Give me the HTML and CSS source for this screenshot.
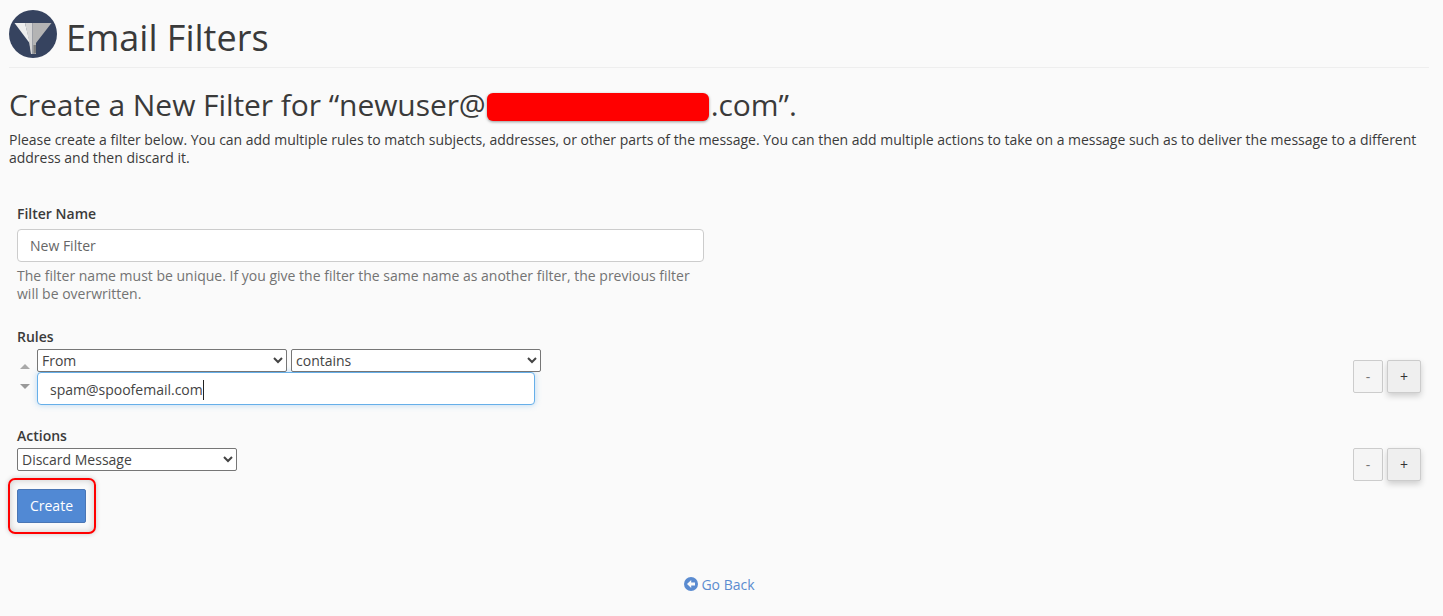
FILE: index.html
```html
<!DOCTYPE html>
<html lang="en">
<head>
<meta charset="utf-8">
<title>Email Filters</title>
<link rel="stylesheet" href="styles.css">
</head>
<body>
<header class="page-header">
  <svg class="logo" viewBox="0 0 48 48" aria-hidden="true">
    <circle cx="24" cy="24" r="24" fill="#36435f"/>
    <path d="M5.5 13H16L21 33V38L22 44L20.5 33Z" fill="#eeeeee"/>
    <path d="M16 13H23.5V44H22L21 38L20.5 33Z" fill="#d6d6d6"/>
    <path d="M23.5 13H42.5L27 33V44L23.5 44Z" fill="#b4b4b4"/>
    <path d="M24.5 35H27V43L24.5 44Z" fill="#7d7d7d"/>
  </svg>
  <h1 class="page-title">Email Filters</h1>
</header>
<main class="content">
  <h2 class="subtitle">Create a New Filter for “newuser@<span class="hidden-domain"></span>.com”.</h2>
  <p class="intro">Please create a filter below. You can add multiple rules to match subjects, addresses, or other parts of the message. You can then add multiple actions to take on a message such as to deliver the message to a different address and then discard it.</p>
  <form class="filter-form">
    <section class="name-section">
      <label class="field-label" for="filter-name">Filter Name</label>
      <input class="text-input" id="filter-name" type="text" placeholder="New Filter">
      <p class="help">The filter name must be unique. If you give the filter the same name as another filter, the previous filter will be overwritten.</p>
    </section>
    <section class="rules-section">
      <div class="field-label">Rules</div>
      <div class="row">
        <div class="movers">
          <span class="up"></span>
          <span class="down"></span>
        </div>
        <div class="rule-fields">
          <div class="select-line">
            <select class="sel sel-from"><option>From</option></select>
            <select class="sel sel-op"><option>contains</option></select>
          </div>
          <div class="text-input focus" role="textbox"><span class="caret">spam@spoofemail.com</span></div>
        </div>
        <div class="pm pm-rule">
          <button class="btn-minus" type="button">-</button>
          <button class="btn-plus" type="button">+</button>
        </div>
      </div>
    </section>
    <section class="actions-section">
      <div class="field-label">Actions</div>
      <div class="row">
        <select class="sel sel-action"><option>Discard Message</option></select>
        <div class="pm pm-action">
          <button class="btn-minus" type="button">-</button>
          <button class="btn-plus" type="button">+</button>
        </div>
      </div>
    </section>
    <div class="submit-line">
      <button class="create" type="button">Create</button>
    </div>
  </form>
  <div class="back"><a href="#">
    <svg class="back-icon" viewBox="0 0 14 14" aria-hidden="true">
      <circle cx="7" cy="7" r="7" fill="#5a8bd0"/>
      <path d="M7.2 3L3 7L7.2 11V8.6H11V5.4H7.2Z" fill="#fafafa"/>
    </svg>Go Back</a></div>
</main>
</body>
</html>
```
FILE: styles.css
```css
*, *::before, *::after { box-sizing: border-box; }
html, body { margin: 0; height: 616px; overflow: hidden; }
body {
  background: #fafafa;
  color: #3a3a3a;
  font-family: "Open Sans", sans-serif;
  font-size: 14px;
  line-height: 18px;
  padding: 0 14px 0 9px;
}
.page-header {
  display: flex;
  align-items: flex-start;
  gap: 9px;
  padding: 10px 0 9px;
  border-bottom: 1px solid #eee;
}
.logo { width: 48px; height: 48px; flex: none; }
.page-title { margin: 0; padding-top: 4px; font-size: 36px; font-weight: 400; line-height: 48px; height: 48px; color: #3a3a3a; }
.subtitle { margin: 19px 0 0; font-size: 30px; font-weight: 400; line-height: 36px; color: #3a3a3a; letter-spacing: -0.07px; white-space: nowrap; }
.hidden-domain {
  display: inline-block;
  width: 222px;
  height: 28px;
  margin: 6px 2px 0 1px;
  vertical-align: top;
  background: #f00;
  border-radius: 6px;
  box-shadow: 0 1px 3px rgba(0,0,0,.4);
}
.intro { margin: 8px 0 0; letter-spacing: -0.018px; }
.filter-form { padding: 0 8px; margin-top: 37px; }
.field-label { display: block; font-weight: 600; line-height: 20px; }
.name-section { width: 687px; }
.text-input {
  display: block;
  width: 100%;
  height: 33px;
  margin-top: 5px;
  padding: 6px 12px;
  border: 1px solid #ccc;
  border-radius: 4px;
  background: #fff;
  font: 14px/20px "Open Sans", sans-serif;
  color: #555;
}
.text-input::placeholder { color: #666; opacity: 1; }
.help { margin: 5px 0 0; color: #737373; }
.rules-section { margin-top: 24px; }
.row { position: relative; display: flex; }
.movers { width: 20px; flex: none; display: flex; flex-direction: column; align-items: center; padding: 17px 5px 0 0; gap: 15px; }
.up, .down { display: block; width: 0; height: 0; border-left: 5px solid transparent; border-right: 5px solid transparent; }
.up { border-bottom: 5px solid #a9a9a9; }
.down { border-top: 5px solid #999; }
.rule-fields { width: 504px; margin-top: 2px; }
.select-line { display: flex; gap: 4px; }
.sel {
  height: 23px;
  padding: 0;
  border: 1px solid #767676;
  border-radius: 2px;
  background-color: #fff;
  font: 14px "Open Sans", sans-serif;
  color: #444;
}
.sel-from { width: 250px; }
.sel-op { width: 250px; }
.sel-action { width: 220px; margin-top: 2px; }
.focus {
  width: 498px;
  margin-top: 0;
  padding: 7px 12px 5px;
  border-color: #66afe9;
  box-shadow: 0 0 6px rgba(102,175,233,.45);
  color: #444;
}
.caret { display: inline-block; line-height: 20px; border-right: 1px solid #222; }
.pm { margin-left: auto; display: flex; gap: 4px; }
.pm-rule { margin-top: 13px; }
.pm-action { margin-top: 2px; }
.btn-minus, .btn-plus {
  height: 33px;
  padding: 0;
  border: 1px solid #ccc;
  border-radius: 2px;
  font: 14px "Open Sans", sans-serif;
  color: #333;
}
.btn-minus { width: 30px; background: #f5f5f5; color: #777; }
.btn-plus { width: 34px; background: #efefef; box-shadow: 0 3px 6px rgba(0,0,0,.18); }
.actions-section { margin-top: 21px; }
.submit-line { position: relative; margin-top: 8px; }
.create {
  width: 69px;
  height: 34px;
  padding: 0 0 2px;
  border: 1px solid #4a76b5;
  border-radius: 2px;
  background: #5189d4;
  color: #fff;
  font: 14px "Open Sans", sans-serif;
}
.submit-line::before {
  content: "";
  position: absolute;
  left: -9px;
  top: -11px;
  width: 88px;
  height: 56px;
  border: 2px solid #f00;
  border-radius: 7px;
  box-shadow: 0 0 5px rgba(0,0,0,.2), inset 0 0 7px rgba(0,0,0,.2);
  pointer-events: none;
}
.back { margin-top: 53px; padding-left: 1px; text-align: center; }
.back a { color: #5b8ccf; text-decoration: none; }
.back-icon { width: 14px; height: 14px; margin-right: 3px; vertical-align: -1px; }
```
